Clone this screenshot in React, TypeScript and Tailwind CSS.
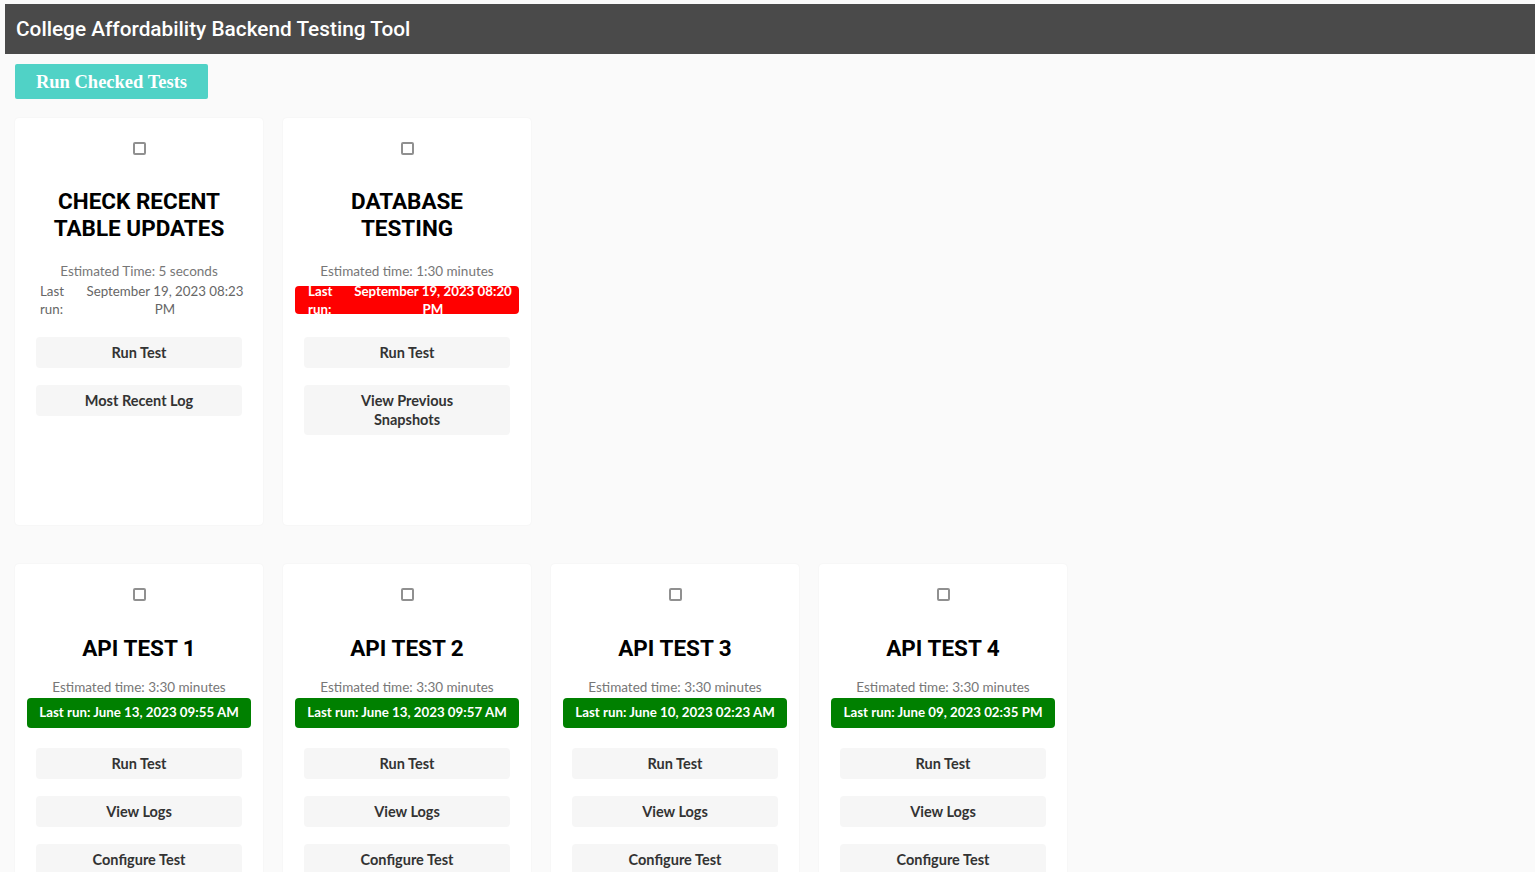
import React from "react";

const body = { fontFamily: "Lato, 'Noto Sans', sans-serif" };
const roboto = { fontFamily: "Roboto, 'Liberation Sans', sans-serif" };

function Checkbox() {
  return <div className="w-[13px] h-[13px] border-2 border-[#909090] rounded-[2px] bg-white mx-auto" />;
}

function Btn({ children }: { children: React.ReactNode }) {
  return (
    <div className="mx-[21px] min-h-[31px] py-[6px] rounded-[4px] bg-[#f6f6f6] text-[#333] text-[14.5px] leading-[19px] font-bold flex items-center justify-center text-center">
      {children}
    </div>
  );
}

function TableRun({ date, red }: { date: string; red?: boolean }) {
  const [d, t] = date.split("|");
  return (
    <div
      className={`mx-[12px] h-[28px] mt-[6px] rounded-[4px] flex items-center pl-[13px] pr-[7px] text-[13.3px] leading-[18px] ${
        red ? "bg-[#ff0000] text-white font-bold" : "text-[#666]"
      }`}
    >
      <div className="w-[46px] text-left whitespace-nowrap">
        Last
        <br />
        run:
      </div>
      <div className="flex-1 text-center whitespace-nowrap">
        {d}
        <br />
        {t}
      </div>
    </div>
  );
}

function GreenRun({ text }: { text: string }) {
  return (
    <div className="mx-[12px] mt-[2px] h-[30px] rounded-[4px] bg-[#008000] text-white font-bold text-[13.3px] flex items-center justify-center whitespace-nowrap">
      {text}
    </div>
  );
}

function Card({ children }: { children: React.ReactNode }) {
  return (
    <div className="w-[248px] h-[407px] bg-white rounded-[4px] shadow-[0_0_2px_rgba(0,0,0,0.06)] pt-[24px] flex flex-col" style={body}>
      {children}
    </div>
  );
}

export default function App() {
  const apis = [
    { t: "API TEST 1", d: "Last run: June 13, 2023 09:55 AM" },
    { t: "API TEST 2", d: "Last run: June 13, 2023 09:57 AM" },
    { t: "API TEST 3", d: "Last run: June 10, 2023 02:23 AM" },
    { t: "API TEST 4", d: "Last run: June 09, 2023 02:35 PM" },
  ];
  return (
    <div className="min-h-screen bg-[#fafafa] pt-[4px] pl-[5px] overflow-hidden">
      <div className="h-[50px] bg-[#4a4a4a] flex items-center px-[11px] pt-[2px]">
        <span className="text-white text-[20.8px] font-medium" style={roboto}>
          College Affordability Backend Testing Tool
        </span>
      </div>
      <div className="px-[10px]">
        <div
          className="mt-[10px] w-[193px] h-[35px] pt-[2px] bg-[#50d2c6] rounded-[2px] text-white font-bold text-[18.5px] flex items-center justify-center"
          style={{ fontFamily: "'Liberation Serif', serif" }}
        >
          Run Checked Tests
        </div>
        <div className="mt-[19px] flex gap-[20px]">
          <Card>
            <Checkbox />
            <h2 className="mt-[33px] text-center text-[22.5px] leading-[27px] font-bold text-black" style={roboto}>
              CHECK RECENT
              <br />
              TABLE UPDATES
            </h2>
            <div className="mt-[20px] text-center text-[13.5px] leading-[18px] text-[#777]">Estimated Time: 5 seconds</div>
            <TableRun date="September 19, 2023 08:23|PM" />
            <div className="mt-[23px] flex flex-col gap-[17px]">
              <Btn>Run Test</Btn>
              <Btn>Most Recent Log</Btn>
            </div>
          </Card>
          <Card>
            <Checkbox />
            <h2 className="mt-[33px] text-center text-[22.5px] leading-[27px] font-bold text-black" style={roboto}>
              DATABASE
              <br />
              TESTING
            </h2>
            <div className="mt-[20px] text-center text-[13.5px] leading-[18px] text-[#777]">Estimated time: 1:30 minutes</div>
            <TableRun date="September 19, 2023 08:20|PM" red />
            <div className="mt-[23px] flex flex-col gap-[17px]">
              <Btn>Run Test</Btn>
              <Btn>
                View Previous
                <br />
                Snapshots
              </Btn>
            </div>
          </Card>
        </div>
        <div className="mt-[39px] flex gap-[20px]">
          {apis.map((a) => (
            <Card key={a.t}>
              <Checkbox />
              <h2 className="mt-[34px] text-center text-[22.5px] leading-[27px] font-bold text-black" style={roboto}>
                {a.t}
              </h2>
              <div className="mt-[16px] text-center text-[13.5px] leading-[18px] text-[#777]">Estimated time: 3:30 minutes</div>
              <GreenRun text={a.d} />
              <div className="mt-[20px] flex flex-col gap-[17px]">
                <Btn>Run Test</Btn>
                <Btn>View Logs</Btn>
                <Btn>Configure Test</Btn>
              </div>
            </Card>
          ))}
        </div>
      </div>
    </div>
  );
}
